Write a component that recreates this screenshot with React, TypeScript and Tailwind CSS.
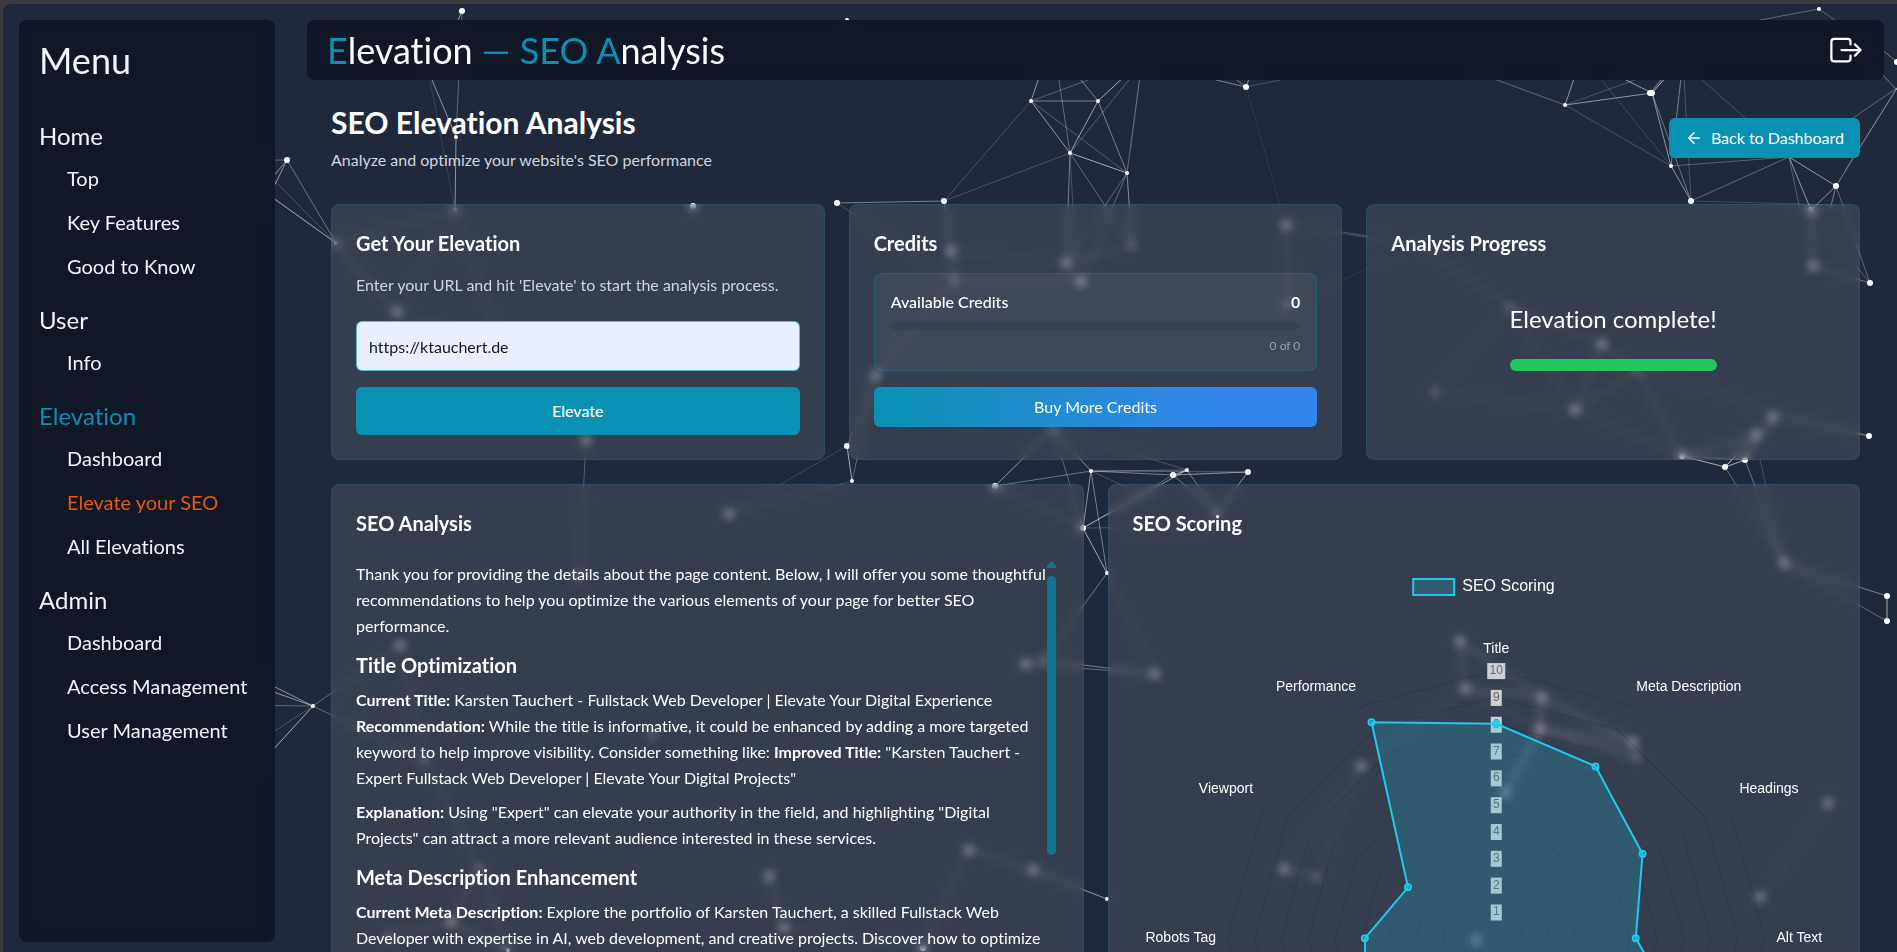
import clsx from 'clsx';
import { ArrowLeft } from 'lucide-react';

type Point = [number, number];

const menu = [
  { title: 'Home', items: ['Top', 'Key Features', 'Good to Know'] },
  { title: 'User', items: ['Info'] },
  { title: 'Elevation', items: ['Dashboard', 'Elevate your SEO', 'All Elevations'] },
  { title: 'Admin', items: ['Dashboard', 'Access Management', 'User Management'] },
];

const ACTIVE_SECTION = 'Elevation';
const ACTIVE_ITEM = 'Elevate your SEO';

// x, y, radius
const particles: [number, number, number][] = [
  [462, 11, 3], [456, 137, 2], [287, 160, 3], [455, 210, 2], [336, 243, 2], [397, 312, 3],
  [168, 161, 3], [262, 190, 3], [171, 252, 3], [136, 310, 3], [313, 706, 2], [400, 645, 3],
  [425, 760, 2], [479, 868, 2], [451, 922, 3], [508, 950, 2], [387, 937, 2], [693, 206, 3],
  [837, 203, 3], [944, 201, 3], [1031, 101, 2], [1098, 101, 2], [1070, 153, 2], [1127, 173, 2],
  [1246, 87, 3], [951, 251, 3], [954, 281, 2], [1066, 263, 3], [1081, 282, 3], [1132, 246, 2],
  [847, 20, 2], [1565, 105, 2], [1650, 93, 3], [1652, 93, 3], [1819, 9, 2], [1671, 166, 2],
  [1691, 201, 3], [1836, 186, 3], [1870, 283, 3], [1811, 210, 3], [1813, 266, 3], [1286, 225, 3],
  [1287, 305, 2], [1510, 307, 2], [1897, 62, 3], [876, 375, 3], [847, 446, 3], [852, 481, 2],
  [1053, 429, 2], [995, 486, 3], [1083, 528, 3], [1091, 471, 2], [1173, 475, 3], [1187, 470, 2],
  [1248, 472, 3], [729, 514, 3], [1107, 573, 2], [1217, 513, 2], [1602, 344, 3], [1637, 370, 2],
  [1575, 410, 3], [1434, 392, 2], [1773, 417, 3], [1756, 434, 3], [1682, 456, 3], [1745, 460, 3],
  [1725, 467, 3], [1869, 436, 3], [1784, 563, 3], [1887, 596, 3], [1887, 621, 3], [1025, 664, 3],
  [1044, 660, 2], [1155, 674, 3], [969, 850, 3], [1033, 870, 3], [1107, 899, 2], [769, 876, 3],
  [784, 928, 3], [923, 948, 3], [653, 735, 2], [1460, 641, 3], [1465, 689, 3],
  [1542, 697, 3], [1540, 729, 3], [1633, 742, 3], [1637, 758, 2], [1361, 766, 3], [1284, 869, 3],
  [1317, 877, 2], [1505, 793, 3], [1476, 940, 3], [1828, 803, 3], [1760, 897, 3], [586, 440, 3],
  [579, 576, 2],
];

// x1, y1, x2, y2, opacity
const links: [number, number, number, number, number][] = [
  [462, 11, 432, 80, 0.5], [462, 11, 456, 137, 0.3], [432, 80, 456, 137, 0.5], [456, 137, 455, 210, 0.5],
  [430, 80, 455, 210, 0.12], [168, 161, 287, 160, 0.3], [287, 160, 262, 190, 0.5], [287, 160, 260, 215, 0.5],
  [287, 160, 336, 243, 0.35], [262, 190, 336, 243, 0.6], [262, 168, 336, 243, 0.2], [336, 243, 397, 312, 0.4],
  [336, 243, 455, 210, 0.25], [455, 210, 397, 312, 0.2], [397, 312, 500, 345, 0.25], [455, 210, 500, 345, 0.2],
  [313, 706, 245, 672, 0.5], [313, 706, 240, 680, 0.5], [313, 706, 225, 705, 0.3], [313, 706, 250, 775, 0.6],
  [313, 706, 258, 742, 0.2], [313, 706, 400, 645, 0.3], [313, 706, 425, 760, 0.3], [400, 645, 425, 760, 0.2],
  [425, 760, 479, 868, 0.3], [479, 868, 451, 922, 0.4], [451, 922, 508, 950, 0.5], [451, 922, 387, 937, 0.4],
  [479, 868, 508, 950, 0.3], [837, 203, 944, 201, 0.4], [944, 201, 1031, 101, 0.2], [944, 201, 1070, 153, 0.2],
  [1031, 101, 1098, 101, 0.4], [1031, 101, 1070, 153, 0.5], [1098, 101, 1070, 153, 0.55], [1098, 101, 1127, 173, 0.4],
  [1070, 153, 1127, 173, 0.6], [1031, 101, 1127, 173, 0.25], [1031, 101, 1045, 60, 0.5], [1031, 101, 1110, 72, 0.25],
  [1098, 101, 1142, 60, 0.6], [1098, 101, 1068, 64, 0.4], [1070, 153, 1145, 60, 0.25], [1070, 153, 1056, 60, 0.3],
  [1127, 173, 1142, 60, 0.3], [1142, 60, 1131, 150, 0.1], [1070, 153, 1066, 263, 0.4], [1070, 153, 1076, 263, 0.2],
  [1070, 153, 1132, 246, 0.3], [1127, 173, 1081, 282, 0.3], [1127, 173, 1132, 246, 0.45], [1127, 173, 1066, 263, 0.3],
  [944, 201, 951, 251, 0.5], [951, 251, 954, 281, 0.5], [951, 251, 1066, 263, 0.2], [954, 281, 1081, 282, 0.25],
  [1066, 263, 1132, 246, 0.3], [1066, 263, 1081, 282, 0.5], [837, 203, 954, 281, 0.2], [954, 281, 876, 375, 0.2],
  [1246, 87, 1216, 80, 0.4], [1246, 87, 1232, 76, 0.4], [1246, 87, 1250, 76, 0.5], [1246, 87, 1280, 80, 0.2],
  [1246, 87, 1286, 225, 0.08], [1286, 225, 1287, 305, 0.3], [1286, 225, 1420, 245, 0.2], [1420, 245, 1510, 307, 0.3],
  [1287, 305, 1420, 245, 0.08], [1565, 105, 1652, 93, 0.5], [1565, 105, 1671, 166, 0.2], [1565, 105, 1577, 70, 0.5],
  [1565, 105, 1475, 72, 0.3], [1565, 105, 1640, 78, 0.2], [1652, 93, 1622, 78, 0.5], [1652, 93, 1690, 50, 0.7],
  [1650, 93, 1690, 46, 0.5], [1652, 93, 1671, 166, 0.5], [1652, 93, 1691, 201, 0.35], [1683, 60, 1671, 166, 0.4],
  [1683, 60, 1691, 201, 0.2], [1600, 78, 1671, 166, 0.15], [1700, 78, 1789, 157, 0.2], [1671, 166, 1691, 201, 0.5],
  [1671, 166, 1789, 157, 0.25], [1691, 201, 1789, 157, 0.3], [1789, 157, 1836, 186, 0.5], [1789, 157, 1811, 210, 0.5],
  [1789, 157, 1800, 210, 0.25], [1836, 186, 1811, 210, 0.5], [1836, 186, 1830, 210, 0.4], [1836, 186, 1897, 88, 0.4],
  [1836, 186, 1870, 283, 0.3], [1897, 88, 1845, 170, 0.15], [1897, 88, 1850, 120, 0.3], [1897, 62, 1880, 48, 0.4],
  [1897, 90, 1880, 72, 0.4], [1819, 9, 1760, 20, 0.3], [1819, 9, 1836, 21, 0.3], [1811, 210, 1813, 266, 0.4],
  [1811, 210, 1870, 283, 0.25], [1813, 266, 1870, 283, 0.35], [1691, 201, 1836, 205, 0.15], [1343, 232, 1368, 236, 0.2],
  [1510, 307, 1602, 344, 0.3], [1602, 344, 1637, 370, 0.35], [1602, 344, 1575, 410, 0.35], [1637, 370, 1575, 410, 0.35],
  [1510, 307, 1434, 392, 0.25], [1434, 392, 1575, 410, 0.2], [1510, 307, 1575, 410, 0.25], [1637, 370, 1682, 456, 0.35],
  [1575, 410, 1682, 456, 0.25], [1637, 370, 1869, 436, 0.2], [1773, 417, 1745, 460, 0.8], [1756, 434, 1725, 467, 0.8],
  [1682, 456, 1725, 467, 0.6], [1682, 456, 1756, 434, 0.4], [1745, 460, 1725, 467, 0.6], [1682, 456, 1745, 460, 0.3],
  [1773, 417, 1869, 436, 0.3], [1725, 467, 1784, 563, 0.3], [1745, 460, 1784, 563, 0.35], [1760, 460, 1784, 563, 0.2],
  [1784, 563, 1887, 596, 0.4], [1784, 563, 1887, 621, 0.3], [1887, 596, 1887, 621, 0.6], [847, 446, 852, 481, 0.6],
  [876, 375, 847, 446, 0.3], [876, 375, 852, 481, 0.3], [847, 446, 729, 514, 0.15], [852, 481, 729, 514, 0.2],
  [1053, 429, 995, 486, 0.5], [1053, 429, 1091, 471, 0.5], [1053, 429, 1083, 528, 0.3], [1053, 429, 1187, 470, 0.2],
  [995, 486, 1091, 471, 0.35], [995, 486, 1083, 528, 0.3], [1091, 471, 1173, 475, 0.4], [1091, 471, 1187, 470, 0.3],
  [1091, 471, 1248, 472, 0.25], [1173, 475, 1248, 472, 0.5], [1173, 475, 1187, 470, 0.6], [1091, 471, 1083, 528, 0.5],
  [1091, 471, 1107, 573, 0.4], [1083, 528, 1107, 573, 0.6], [1083, 528, 1187, 470, 0.5], [1083, 528, 1173, 475, 0.3],
  [1083, 528, 1217, 527, 0.2], [1173, 475, 1217, 513, 0.4], [1187, 470, 1217, 513, 0.4], [1248, 472, 1217, 513, 0.5],
  [1091, 471, 1155, 500, 0.2], [1107, 573, 1044, 660, 0.35], [1107, 573, 1155, 674, 0.2], [1044, 660, 1155, 674, 0.4],
  [1025, 664, 1155, 674, 0.3], [1025, 664, 1044, 660, 0.4], [969, 850, 1033, 870, 0.4], [1033, 870, 1107, 899, 0.5],
  [969, 850, 923, 948, 0.3], [769, 876, 784, 928, 0.4], [784, 928, 923, 948, 0.2], [1460, 641, 1465, 689, 0.5],
  [1460, 641, 1542, 697, 0.5], [1465, 689, 1542, 697, 0.5], [1542, 697, 1540, 729, 0.9], [1542, 697, 1633, 742, 0.6],
  [1540, 729, 1637, 758, 0.6], [1540, 729, 1505, 793, 0.9], [1540, 729, 1633, 742, 0.5], [1633, 742, 1637, 758, 0.8],
  [1465, 689, 1540, 729, 0.3], [1284, 869, 1317, 877, 0.5], [1361, 766, 1284, 869, 0.2], [1361, 766, 1317, 877, 0.2],
  [1361, 766, 1465, 689, 0.2], [1828, 803, 1760, 897, 0.25], [586, 440, 579, 576, 0.25],
];

function ParticleNetwork() {
  return (
    <svg
      className="absolute inset-0 h-full w-full"
      viewBox="0 0 1897 952"
      preserveAspectRatio="xMidYMid slice"
      aria-hidden="true"
    >
      {links.map(([x1, y1, x2, y2, o], i) => (
        <line key={i} x1={x1} y1={y1} x2={x2} y2={y2} stroke="#fff" strokeOpacity={o} />
      ))}
      {particles.map(([x, y, r], i) => (
        <circle key={i} cx={x} cy={y} r={r} fill="#fff" />
      ))}
    </svg>
  );
}

const scores = [8, 7.4, 6.3, 5.2, 9, 7, 6, 7, 5.6, 4.9, 3.8, 9.3];
const CX = 363;
const CY = 390;
const STEP = 26.8;

const polar = (i: number, value: number): Point => {
  const a = (i * Math.PI) / 6;
  return [CX + Math.sin(a) * value * STEP, CY - Math.cos(a) * value * STEP];
};

const polygon = (values: number[]) =>
  values.map((v, i) => polar(i, v).map((n) => n.toFixed(1)).join(',')).join(' ');

const axisLabels: { text: string; x: number; y: number; anchor: 'start' | 'middle' | 'end' }[] = [
  { text: 'Title', x: 363, y: 105, anchor: 'middle' },
  { text: 'Meta Description', x: 503, y: 143, anchor: 'start' },
  { text: 'Headings', x: 606, y: 245, anchor: 'start' },
  { text: 'Alt Text', x: 643, y: 394, anchor: 'start' },
  { text: 'Robots Tag', x: 83, y: 394, anchor: 'end' },
  { text: 'Viewport', x: 120, y: 245, anchor: 'end' },
  { text: 'Performance', x: 223, y: 143, anchor: 'end' },
];

function ScoringChart() {
  const ticks = Array.from({ length: 10 }, (_, i) => i + 1);
  return (
    <svg
      className="w-full font-['Liberation_Sans',Arial,sans-serif]"
      viewBox="0 0 702 702"
      role="img"
      aria-label="SEO Scoring"
    >
      <rect x="280" y="31" width="41" height="16" fill="#22d3ee" fillOpacity="0.2" stroke="#22c9ee" strokeWidth="2" />
      <text x="329" y="43" fontSize="16" fill="#fff">SEO Scoring</text>

      {ticks.map((t) => (
        <polygon key={t} points={polygon(Array(12).fill(t))} fill="none" stroke="#000" strokeOpacity="0.12" />
      ))}
      {ticks.map((t) => {
        const w = t === 10 ? 18 : 11;
        const y = CY - t * STEP;
        return (
          <g key={t}>
            <rect x={CX - w / 2} y={y - 7} width={w} height="16" fill="#fff" fillOpacity="0.75" />
            <text x={CX} y={y + 4} fontSize="12" fill="#666" textAnchor="middle">{t}</text>
          </g>
        );
      })}
      <polygon points={polygon(scores)} fill="#22b8d8" fillOpacity="0.24" stroke="#22c9ee" strokeWidth="2" />
      {scores.map((s, i) => {
        const [x, y] = polar(i, s);
        return <circle key={i} cx={x} cy={y} r="3" fill="#22d3ee" fillOpacity={i === 0 ? 1 : 0.2} stroke="#22c9ee" strokeWidth="2" />;
      })}
      {axisLabels.map((l) => (
        <text key={l.text} x={l.x} y={l.y} fontSize="14" fill="#fff" textAnchor={l.anchor}>{l.text}</text>
      ))}
    </svg>
  );
}

function Card({ title, className, children }: { title: string; className?: string; children: React.ReactNode }) {
  return (
    <section className={clsx('rounded-lg border border-cyan-600/20 bg-white/10 p-6 backdrop-blur-[5px]', className)}>
      <h2 className="text-xl font-bold">{title}</h2>
      {children}
    </section>
  );
}

function Sidebar() {
  return (
    <nav className="w-64 shrink-0 rounded-lg bg-[#0f1526]/93 px-5 pt-5 text-slate-100 backdrop-blur-sm">
      <h2 className="mb-10 text-4xl">Menu</h2>
      {menu.map((section) => (
        <div key={section.title} className="mb-4">
          <h3 className={clsx('text-2xl', section.title === ACTIVE_SECTION && 'text-[#0891b2]')}>{section.title}</h3>
          <ul className="mt-1 pl-7">
            {section.items.map((item) => (
              <li key={item}>
                <a href="#" className={clsx('block py-2 text-xl whitespace-nowrap', item === ACTIVE_ITEM && 'text-[#ea580c]')}>
                  {item}
                </a>
              </li>
            ))}
          </ul>
        </div>
      ))}
    </nav>
  );
}

export default function App() {
  return (
    <div className="h-screen overflow-hidden bg-[#3a3a3a] pt-1 pl-[3px] font-[Lato,sans-serif] text-white [font-variant-ligatures:none]">
      <div className="relative h-full overflow-hidden rounded-tl-lg bg-[#1f293b]">
        <div className="absolute -top-1 -left-[3px] h-screen w-screen">
          <ParticleNetwork />
        </div>

        <div className="relative flex h-full gap-8 pt-4 pr-[13px] pb-[10px] pl-4">
          <Sidebar />

          <main className="min-w-0 flex-1">
            <header className="flex h-[60px] items-center justify-between rounded-lg bg-[#0f1526]/93 px-5 backdrop-blur-sm">
              <h1 className="text-4xl">
                <span className="text-[#0891b2]">E</span>levation <span className="text-[#0891b2]">— SEO A</span>nalysis
              </h1>
              <button type="button" aria-label="Log out">
                <svg viewBox="0 0 512 512" className="h-9 w-9" fill="none" stroke="currentColor" strokeWidth="32" strokeLinecap="round" strokeLinejoin="round">
                  <path d="M320 176v-40a40 40 0 0 0-40-40H88a40 40 0 0 0-40 40v240a40 40 0 0 0 40 40h192a40 40 0 0 0 40-40v-40M384 176l80 80-80 80M191 256h273" />
                </svg>
              </button>
            </header>

            <div className="p-6">
              <div className="mb-8 flex items-center justify-between">
                <div>
                  <h2 className="mb-2 text-3xl font-bold">SEO Elevation Analysis</h2>
                  <p className="text-gray-300">Analyze and optimize your website's SEO performance</p>
                </div>
                <a href="#" className="flex h-10 items-center gap-2 rounded-md bg-[#0891b2] px-4">
                  <ArrowLeft size={18} />
                  Back to Dashboard
                </a>
              </div>

              <div className="grid grid-cols-3 gap-6">
                <Card title="Get Your Elevation">
                  <label htmlFor="url" className="mt-4 mb-6 block text-gray-300">
                    Enter your URL and hit 'Elevate' to start the analysis process.
                  </label>
                  <input
                    id="url"
                    type="text"
                    defaultValue="https://ktauchert.de"
                    className="h-[50px] w-full rounded-md border border-cyan-600/60 bg-[#e8f0fe] px-3 text-gray-900"
                  />
                  <button type="button" className="mt-4 h-12 w-full rounded-md bg-[#0891b2] font-medium">
                    Elevate
                  </button>
                </Card>

                <Card title="Credits">
                  <div className="mt-4 rounded-lg border border-cyan-600/30 bg-white/5 p-4">
                    <div className="flex justify-between">
                      <span className="font-medium">Available Credits</span>
                      <span className="font-bold">0</span>
                    </div>
                    <div className="mt-2 h-2 rounded-full bg-[#364353]" />
                    <p className="mt-2 text-right text-xs text-gray-400">0 of 0</p>
                  </div>
                  <button type="button" className="mt-4 h-10 w-full rounded-md bg-linear-to-r from-[#0891b2] to-[#3385ee] to-80%">
                    Buy More Credits
                  </button>
                </Card>

                <Card title="Analysis Progress">
                  <div className="mx-auto mt-4 w-fit pt-[30px]">
                    <p className="text-2xl">Elevation complete!</p>
                    <div className="mt-6 h-3 rounded-full bg-[#22c55e]" />
                  </div>
                </Card>
              </div>

              <div className="mt-6 grid grid-cols-2 gap-6">
                <Card title="SEO Analysis">
                  <div className="mt-6 flex">
                    <div className="min-w-0 flex-1 leading-[26px]">
                      <p>
                        Thank you for providing the details about the page content. Below, I will offer you some thoughtful
                        recommendations to help you optimize the various elements of your page for better SEO performance.
                      </p>
                      <h3 className="mt-3 mb-2 text-xl font-bold">Title Optimization</h3>
                      <p>
                        <strong>Current Title:</strong> Karsten Tauchert - Fullstack Web Developer | Elevate Your Digital Experience
                        <br />
                        <strong>Recommendation:</strong> While the title is informative, it could be enhanced by adding a more targeted
                        keyword to help improve visibility. Consider something like: <strong>Improved Title:</strong> "Karsten Tauchert -
                        Expert Fullstack Web Developer | Elevate Your Digital Projects"
                      </p>
                      <p className="mt-2">
                        <strong>Explanation:</strong> Using "Expert" can elevate your authority in the field, and highlighting "Digital
                        Projects" can attract a more relevant audience interested in these services.
                      </p>
                      <h3 className="mt-3 mb-2 text-xl font-bold">Meta Description Enhancement</h3>
                      <p>
                        <strong>Current Meta Description:</strong> Explore the portfolio of Karsten Tauchert, a skilled Fullstack Web
                        Developer with expertise in AI, web development, and creative projects. Discover how to optimize
                      </p>
                    </div>
                    <div className="mr-[3px] flex w-[9px] shrink-0 flex-col gap-2" aria-hidden="true">
                      <svg viewBox="0 0 9 7" className="h-[7px] w-[9px]" fill="#127490">
                        <path d="M4.5 0 9 5v2H0V5z" />
                      </svg>
                      <div className="h-[279px] rounded-full bg-[#127490]" />
                    </div>
                  </div>
                </Card>

                <Card title="SEO Scoring">
                  <div className="mt-[11px]">
                    <ScoringChart />
                  </div>
                </Card>
              </div>
            </div>
          </main>
        </div>
      </div>
    </div>
  );
}
